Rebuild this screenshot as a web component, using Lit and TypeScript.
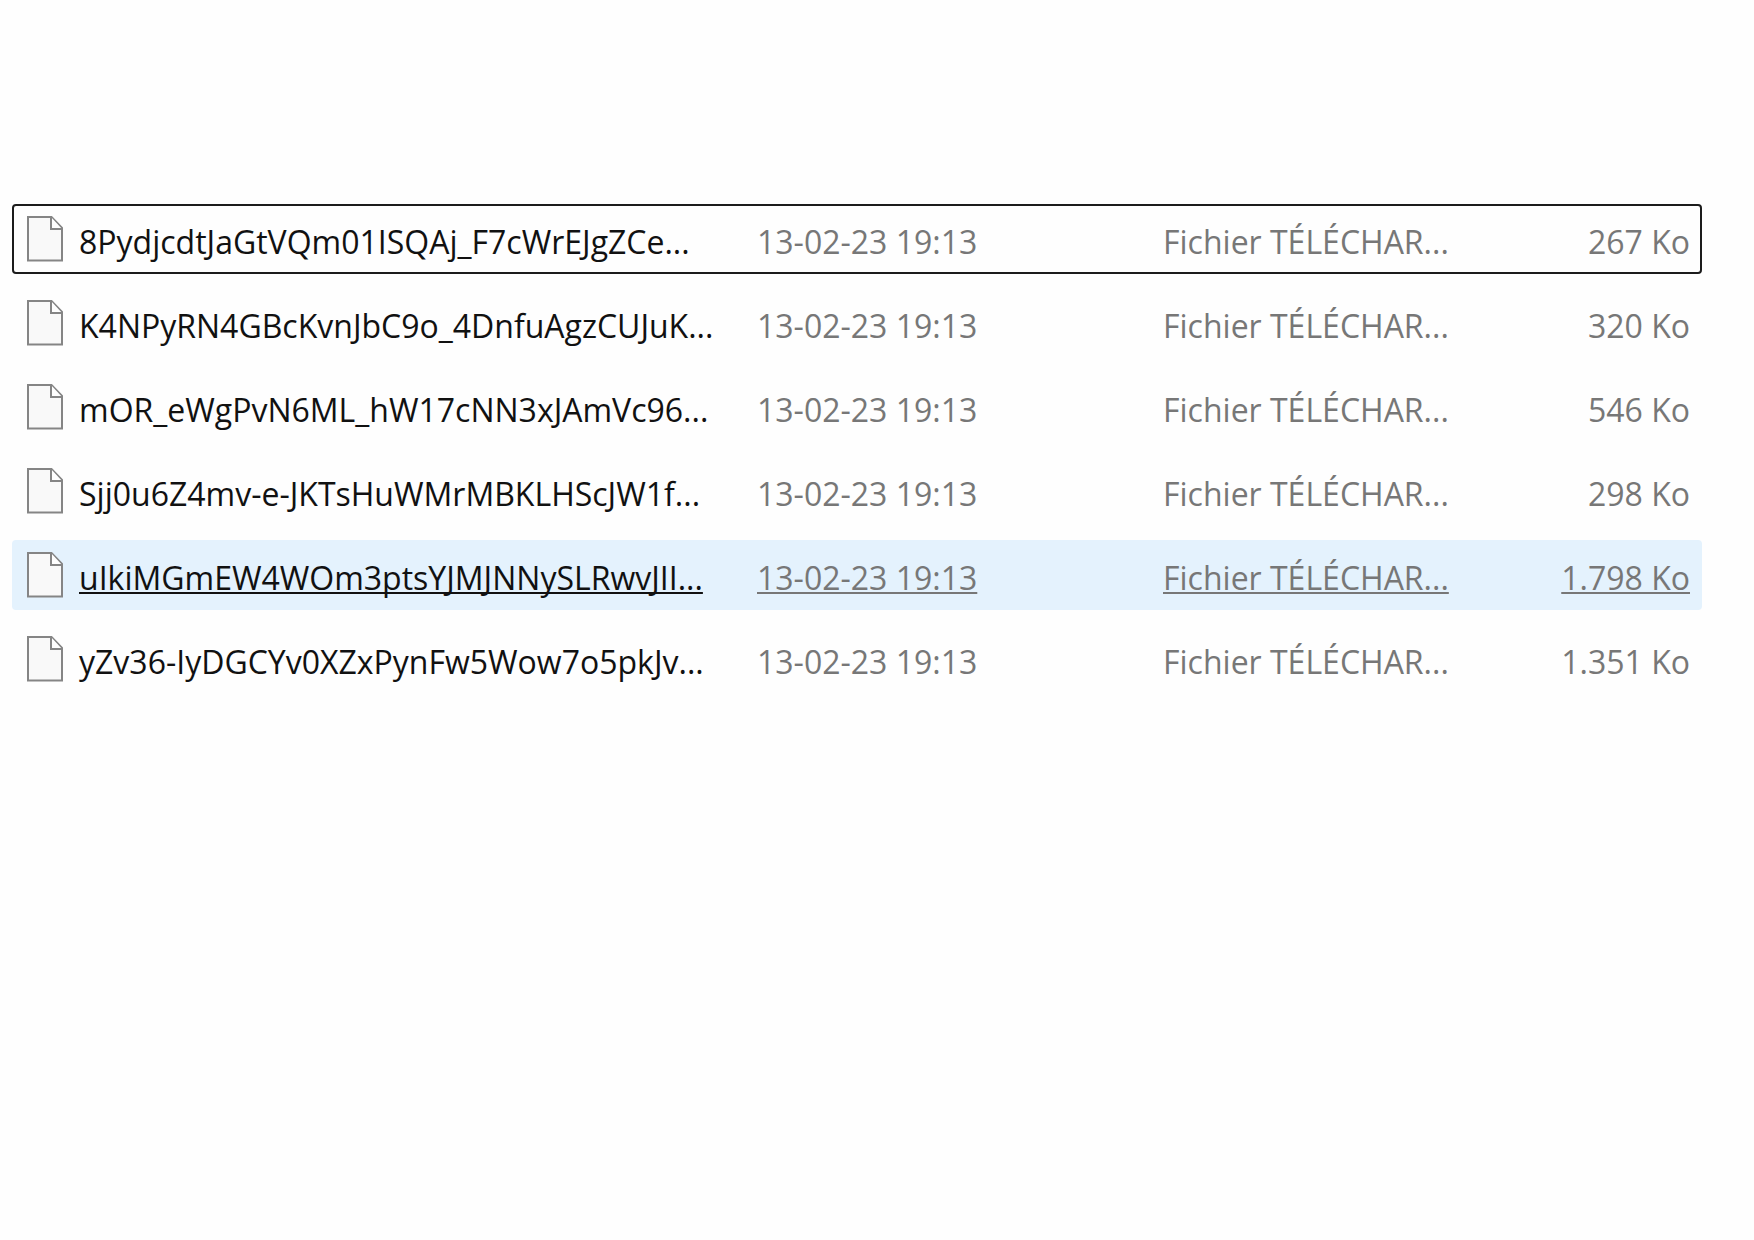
import { LitElement, html, css } from "lit";
import { customElement } from "lit/decorators.js";
import { classMap } from "lit/directives/class-map.js";

interface FileRow {
  name: string;
  size: string;
  state?: "focused" | "hovered";
}

const DATE = "13-02-23 19:13";
const KIND = "Fichier TÉLÉCHAR...";

const FILES: FileRow[] = [
  { name: "8PydjcdtJaGtVQm01ISQAj_F7cWrEJgZCe...", size: "267 Ko", state: "focused" },
  { name: "K4NPyRN4GBcKvnJbC9o_4DnfuAgzCUJuK...", size: "320 Ko" },
  { name: "mOR_eWgPvN6ML_hW17cNN3xJAmVc96...", size: "546 Ko" },
  { name: "Sjj0u6Z4mv-e-JKTsHuWMrMBKLHScJW1f...", size: "298 Ko" },
  { name: "uIkiMGmEW4WOm3ptsYJMJNNySLRwvJII...", size: "1.798 Ko", state: "hovered" },
  { name: "yZv36-IyDGCYv0XZxPynFw5Wow7o5pkJv...", size: "1.351 Ko" },
];

const fileIcon = html`<svg class="icon" viewBox="0 0 36 46" aria-hidden="true">
  <path d="M1 1H24.500L35 12V44.500H1Z" fill="#f9f9f9" stroke="#858585" stroke-width="2" />
  <path d="M24 1V13H35" fill="#fefefe" stroke="#858585" stroke-width="2" />
</svg>`;

@customElement("app-root")
export class AppRoot extends LitElement {
  static styles = css`
    :host {
      display: block;
      min-height: 100vh;
      box-sizing: border-box;
      padding: 204px 52px 0 12px;
      background: #fefefe;
      font-family: "Open Sans", "Noto Sans", sans-serif;
      font-size: 32px;
      line-height: 44px;
    }
    .files {
      display: block;
    }
    .body {
      display: flex;
      flex-direction: column;
      gap: 14px;
    }
    .row {
      display: grid;
      grid-template-columns: 730fr 406fr 320fr 207fr;
      box-sizing: border-box;
      min-height: 70px;
      padding: 6px 10px 0 13px;
      border: 2px solid transparent;
      border-radius: 4px;
    }
    .row.focused {
      border-color: #1c1c1c;
    }
    .row.hovered {
      background: #e4f2fd;
      border-color: #e4f2fd;
    }
    .row.hovered .label {
      text-decoration: underline 2px;
      text-underline-offset: 2px;
      text-decoration-skip-ink: none;
    }
    .cell {
      display: flex;
      align-items: center;
      min-width: 0;
      padding: 0;
      white-space: nowrap;
      color: #777;
    }
    .name {
      gap: 16px;
      color: #111;
    }
    .size {
      justify-content: flex-end;
    }
    .icon {
      flex: none;
      width: 36px;
      height: 46px;
      margin-bottom: 6px;
    }
  `;

  render() {
    return html`<table class="files" role="table">
      <tbody class="body" role="rowgroup">
        ${FILES.map(
          (f) => html`<tr
            role="row"
            class=${classMap({ row: true, focused: f.state === "focused", hovered: f.state === "hovered" })}
          >
            <td role="cell" class="cell name">${fileIcon}<span class="label">${f.name}</span></td>
            <td role="cell" class="cell"><span class="label">${DATE}</span></td>
            <td role="cell" class="cell"><span class="label">${KIND}</span></td>
            <td role="cell" class="cell size"><span class="label">${f.size}</span></td>
          </tr>`
        )}
      </tbody>
    </table>`;
  }
}
